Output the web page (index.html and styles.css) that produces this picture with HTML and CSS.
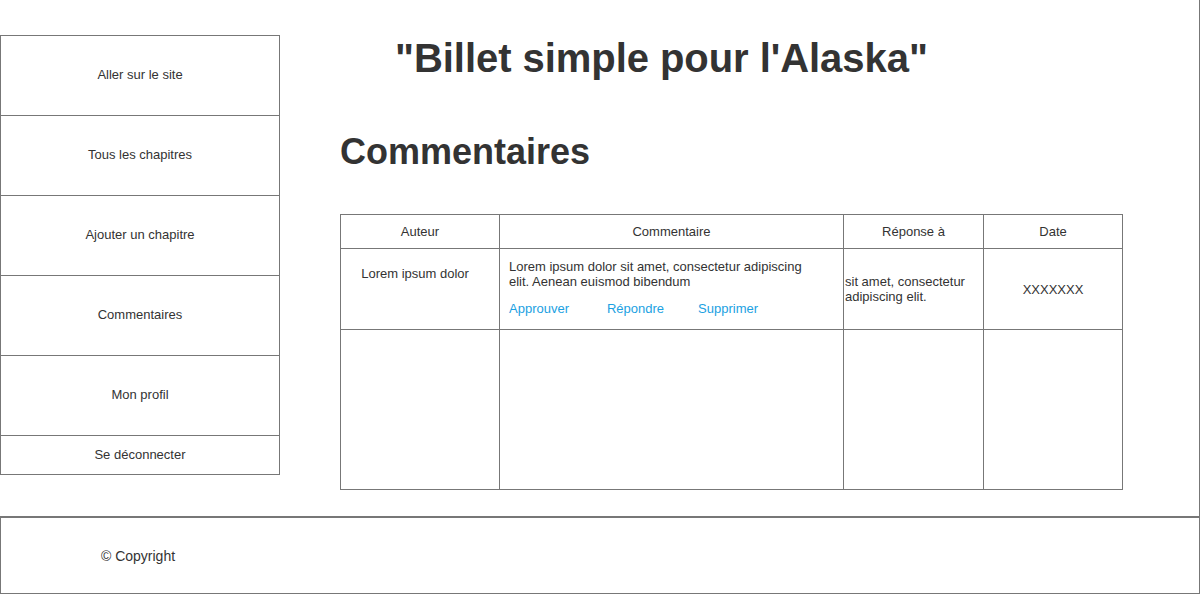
FILE: index.html
```html
<!DOCTYPE html>
<html lang="fr">
<head>
<meta charset="utf-8">
<title>Billet simple pour l'Alaska - Commentaires</title>
<link rel="stylesheet" href="styles.css">
</head>
<body>
<div class="page">
  <div class="top">
    <nav class="sidebar">
      <a class="nav-item" href="#">Aller sur le site</a>
      <a class="nav-item" href="#">Tous les chapitres</a>
      <a class="nav-item" href="#">Ajouter un chapitre</a>
      <a class="nav-item" href="#">Commentaires</a>
      <a class="nav-item" href="#">Mon profil</a>
      <a class="nav-item nav-last" href="#">Se déconnecter</a>
    </nav>
    <main class="main">
      <h1 class="title">"Billet simple pour l'Alaska"</h1>
      <h2 class="subtitle">Commentaires</h2>
      <div class="grid">
        <div class="cell head">Auteur</div>
        <div class="cell head">Commentaire</div>
        <div class="cell head">Réponse à</div>
        <div class="cell head">Date</div>

        <div class="cell author">Lorem ipsum dolor</div>
        <div class="cell comment">
          <p class="comment-text">Lorem ipsum dolor sit amet, consectetur adipiscing elit. Aenean euismod bibendum</p>
          <div class="actions">
            <a class="link link-approve" href="#">Approuver</a>
            <a class="link link-reply" href="#">Répondre</a>
            <a class="link" href="#">Supprimer</a>
          </div>
        </div>
        <div class="cell reply">sit amet, consectetur adipiscing elit.</div>
        <div class="cell date">XXXXXXX</div>

        <div class="cell empty"></div>
        <div class="cell empty"></div>
        <div class="cell empty"></div>
        <div class="cell empty"></div>
      </div>
    </main>
  </div>
  <footer class="footer">
    <div class="footer-text">© Copyright</div>
  </footer>
</div>
</body>
</html>
```

FILE: styles.css
```css
* {
  box-sizing: border-box;
}

html, body {
  margin: 0;
  padding: 0;
  background: #fff;
}

body {
  font-family: "Liberation Sans", Arial, sans-serif;
  color: #333;
  font-size: 13px;
}

.page {
  width: 1200px;
  height: 594px;
  display: flex;
  flex-direction: column;
  border-right: 1px solid #777;
}

.top {
  display: flex;
  height: 516px;
}

.sidebar {
  width: 280px;
  margin-top: 35px;
  align-self: flex-start;
  border: 1px solid #777;
  display: flex;
  flex-direction: column;
}

.nav-item {
  height: 80px;
  border-bottom: 1px solid #777;
  display: flex;
  align-items: center;
  justify-content: center;
  color: #333;
  text-decoration: none;
  font-size: 13px;
  padding-bottom: 3px;
}

.nav-item.nav-last {
  height: 38px;
  border-bottom: none;
  padding-bottom: 1px;
}

.main {
  flex: 1;
  padding-left: 60px;
}

.title {
  margin: 35px 0 0 55px;
  font-size: 40px;
  line-height: 46px;
  font-weight: bold;
  color: #333;
  letter-spacing: -0.05px;
}

.subtitle {
  margin: 50px 0 0 0;
  font-size: 36px;
  line-height: 41px;
  font-weight: bold;
  color: #333;
}

.grid {
  margin-top: 42px;
  width: 783px;
  display: grid;
  grid-template-columns: 159px 344px 140px 139px;
  grid-template-rows: 34px 81px 160px;
  border-left: 1px solid #777;
  border-top: 1px solid #777;
}

.cell {
  border-right: 1px solid #777;
  border-bottom: 1px solid #777;
  font-size: 13px;
  line-height: 15px;
}

.head {
  display: flex;
  align-items: center;
  justify-content: center;
}

.author {
  text-align: center;
  padding: 17px 10px 0 0;
}

.comment {
  padding: 10px 24px 0 9px;
}

.comment-text {
  margin: 0;
}

.actions {
  margin-top: 12px;
  display: flex;
}

.link {
  color: #1ba1e2;
  text-decoration: none;
}

.link-approve {
  margin-right: 38px;
}

.link-reply {
  margin-right: 34px;
}

.reply {
  display: flex;
  align-items: center;
  padding: 0 4px 0 1px;
}

.date {
  display: flex;
  align-items: center;
  justify-content: center;
}

.footer {
  height: 78px;
  border-top: 2px solid #777;
  border-left: 1px solid #777;
  border-bottom: 1px solid #777;
  display: flex;
  align-items: center;
}

.footer-text {
  width: 274px;
  text-align: center;
  font-size: 14px;
}
```
